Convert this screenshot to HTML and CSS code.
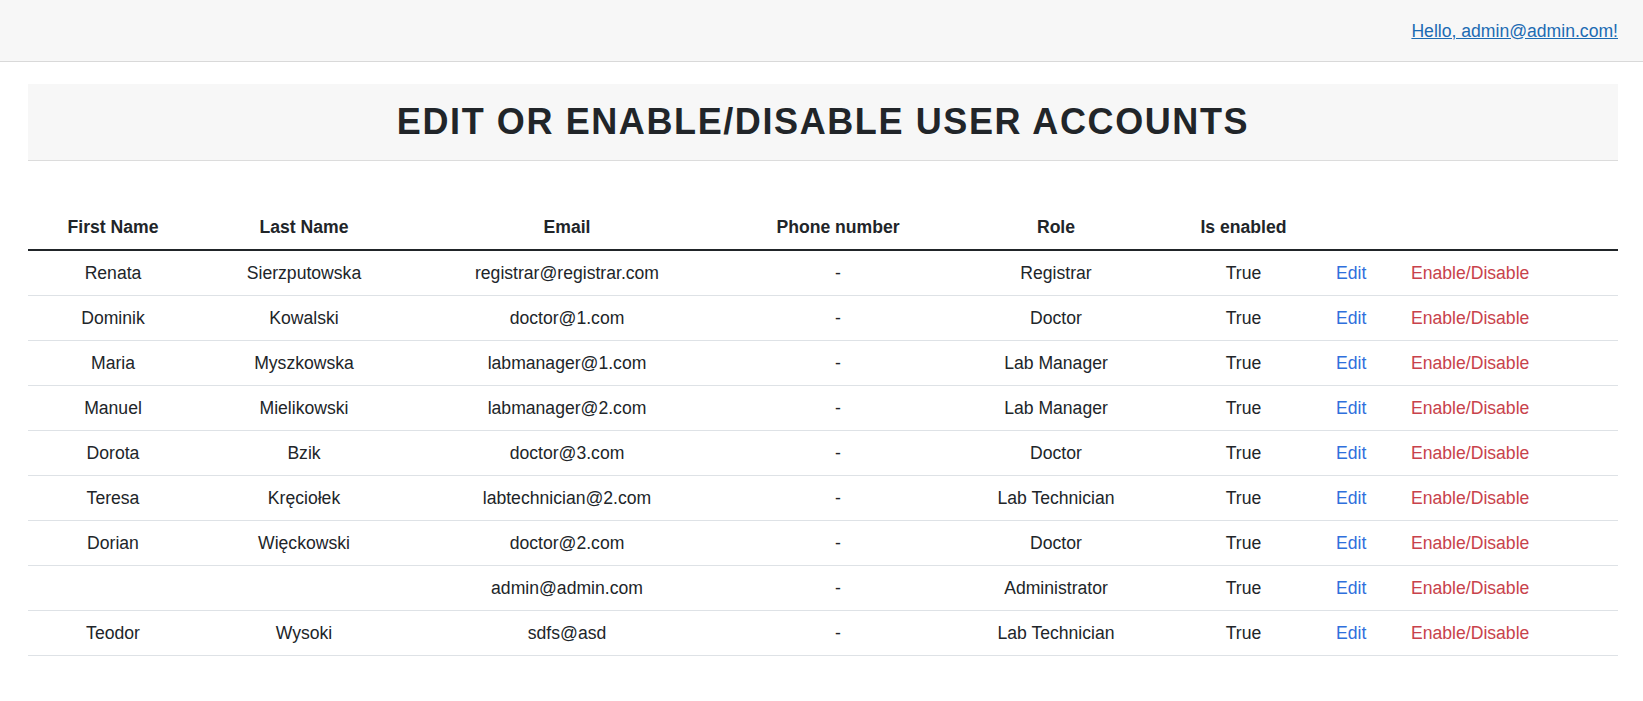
FILE: index.html
```html
<!DOCTYPE html>
<html lang="en">
<head>
<meta charset="utf-8">
<title>User accounts</title>
<link rel="stylesheet" href="styles.css">
</head>
<body>
<header class="topbar">
  <a class="hello" href="#">Hello, admin@admin.com!</a>
</header>
<main class="container">
  <div class="title-box">
    <h1 class="title">Edit or Enable/Disable User Accounts</h1>
  </div>
  <table class="users">
    <colgroup>
      <col class="c1"><col class="c2"><col class="c3"><col class="c4"><col class="c5"><col class="c6"><col class="c7"><col class="c8">
    </colgroup>
    <thead>
      <tr><th>First Name</th><th>Last Name</th><th>Email</th><th>Phone number</th><th>Role</th><th>Is enabled</th><th></th><th></th></tr>
    </thead>
    <tbody>
      <tr><td>Renata</td><td>Sierzputowska</td><td>registrar@registrar.com</td><td>-</td><td>Registrar</td><td>True</td><td class="act"><a class="edit" href="#">Edit</a></td><td class="act"><a class="toggle" href="#">Enable/Disable</a></td></tr>
      <tr><td>Dominik</td><td>Kowalski</td><td>doctor@1.com</td><td>-</td><td>Doctor</td><td>True</td><td class="act"><a class="edit" href="#">Edit</a></td><td class="act"><a class="toggle" href="#">Enable/Disable</a></td></tr>
      <tr><td>Maria</td><td>Myszkowska</td><td>labmanager@1.com</td><td>-</td><td>Lab Manager</td><td>True</td><td class="act"><a class="edit" href="#">Edit</a></td><td class="act"><a class="toggle" href="#">Enable/Disable</a></td></tr>
      <tr><td>Manuel</td><td>Mielikowski</td><td>labmanager@2.com</td><td>-</td><td>Lab Manager</td><td>True</td><td class="act"><a class="edit" href="#">Edit</a></td><td class="act"><a class="toggle" href="#">Enable/Disable</a></td></tr>
      <tr><td>Dorota</td><td>Bzik</td><td>doctor@3.com</td><td>-</td><td>Doctor</td><td>True</td><td class="act"><a class="edit" href="#">Edit</a></td><td class="act"><a class="toggle" href="#">Enable/Disable</a></td></tr>
      <tr><td>Teresa</td><td>Kręciołek</td><td>labtechnician@2.com</td><td>-</td><td>Lab Technician</td><td>True</td><td class="act"><a class="edit" href="#">Edit</a></td><td class="act"><a class="toggle" href="#">Enable/Disable</a></td></tr>
      <tr><td>Dorian</td><td>Więckowski</td><td>doctor@2.com</td><td>-</td><td>Doctor</td><td>True</td><td class="act"><a class="edit" href="#">Edit</a></td><td class="act"><a class="toggle" href="#">Enable/Disable</a></td></tr>
      <tr><td></td><td></td><td>admin@admin.com</td><td>-</td><td>Administrator</td><td>True</td><td class="act"><a class="edit" href="#">Edit</a></td><td class="act"><a class="toggle" href="#">Enable/Disable</a></td></tr>
      <tr><td>Teodor</td><td>Wysoki</td><td>sdfs@asd</td><td>-</td><td>Lab Technician</td><td>True</td><td class="act"><a class="edit" href="#">Edit</a></td><td class="act"><a class="toggle" href="#">Enable/Disable</a></td></tr>
    </tbody>
  </table>
</main>
</body>
</html>
```

FILE: styles.css
```css
* { box-sizing: border-box; }

body {
  margin: 0;
  font-family: "Liberation Sans", Arial, sans-serif;
  font-size: 17.6px;
  line-height: 24px;
  color: #212529;
  background: #ffffff;
}

.topbar {
  height: 62px;
  background: #f7f7f7;
  border-bottom: 1px solid #d9d9d9;
  display: flex;
  align-items: center;
  justify-content: flex-end;
  padding: 0 25px 0 0;
}

.hello {
  color: #1c6bb3;
  text-decoration: underline;
}

.container {
  padding: 22px 25px 0 28px;
}

.title-box {
  background: #f7f7f7;
  border-bottom: 1px solid #dcdcdc;
  height: 77px;
  display: flex;
  align-items: center;
  justify-content: center;
}

.title {
  margin: 0;
  font-size: 36px;
  line-height: 40px;
  font-weight: 700;
  letter-spacing: 1.6px;
  text-transform: uppercase;
  color: #212529;
}

.users {
  width: 1590px;
  margin-top: 44px;
  border-collapse: collapse;
}

.c1 { width: 170px; }
.c2 { width: 212px; }
.c3 { width: 314px; }
.c4 { width: 228px; }
.c5 { width: 208px; }
.c6 { width: 167px; }
.c7 { width: 75px; }
.c8 { width: 216px; }

.users th {
  font-weight: 700;
  text-align: center;
  padding: 10px 8px;
  border-bottom: 2px solid #212529;
}

.users td {
  text-align: center;
  padding: 10px 8px;
  border-bottom: 1px solid #dee2e6;
}

.users td.act {
  text-align: left;
  padding-left: 9px;
}

.edit {
  color: #2f6fdc;
  text-decoration: none;
}

.toggle {
  color: #c8424b;
  text-decoration: none;
}
```
